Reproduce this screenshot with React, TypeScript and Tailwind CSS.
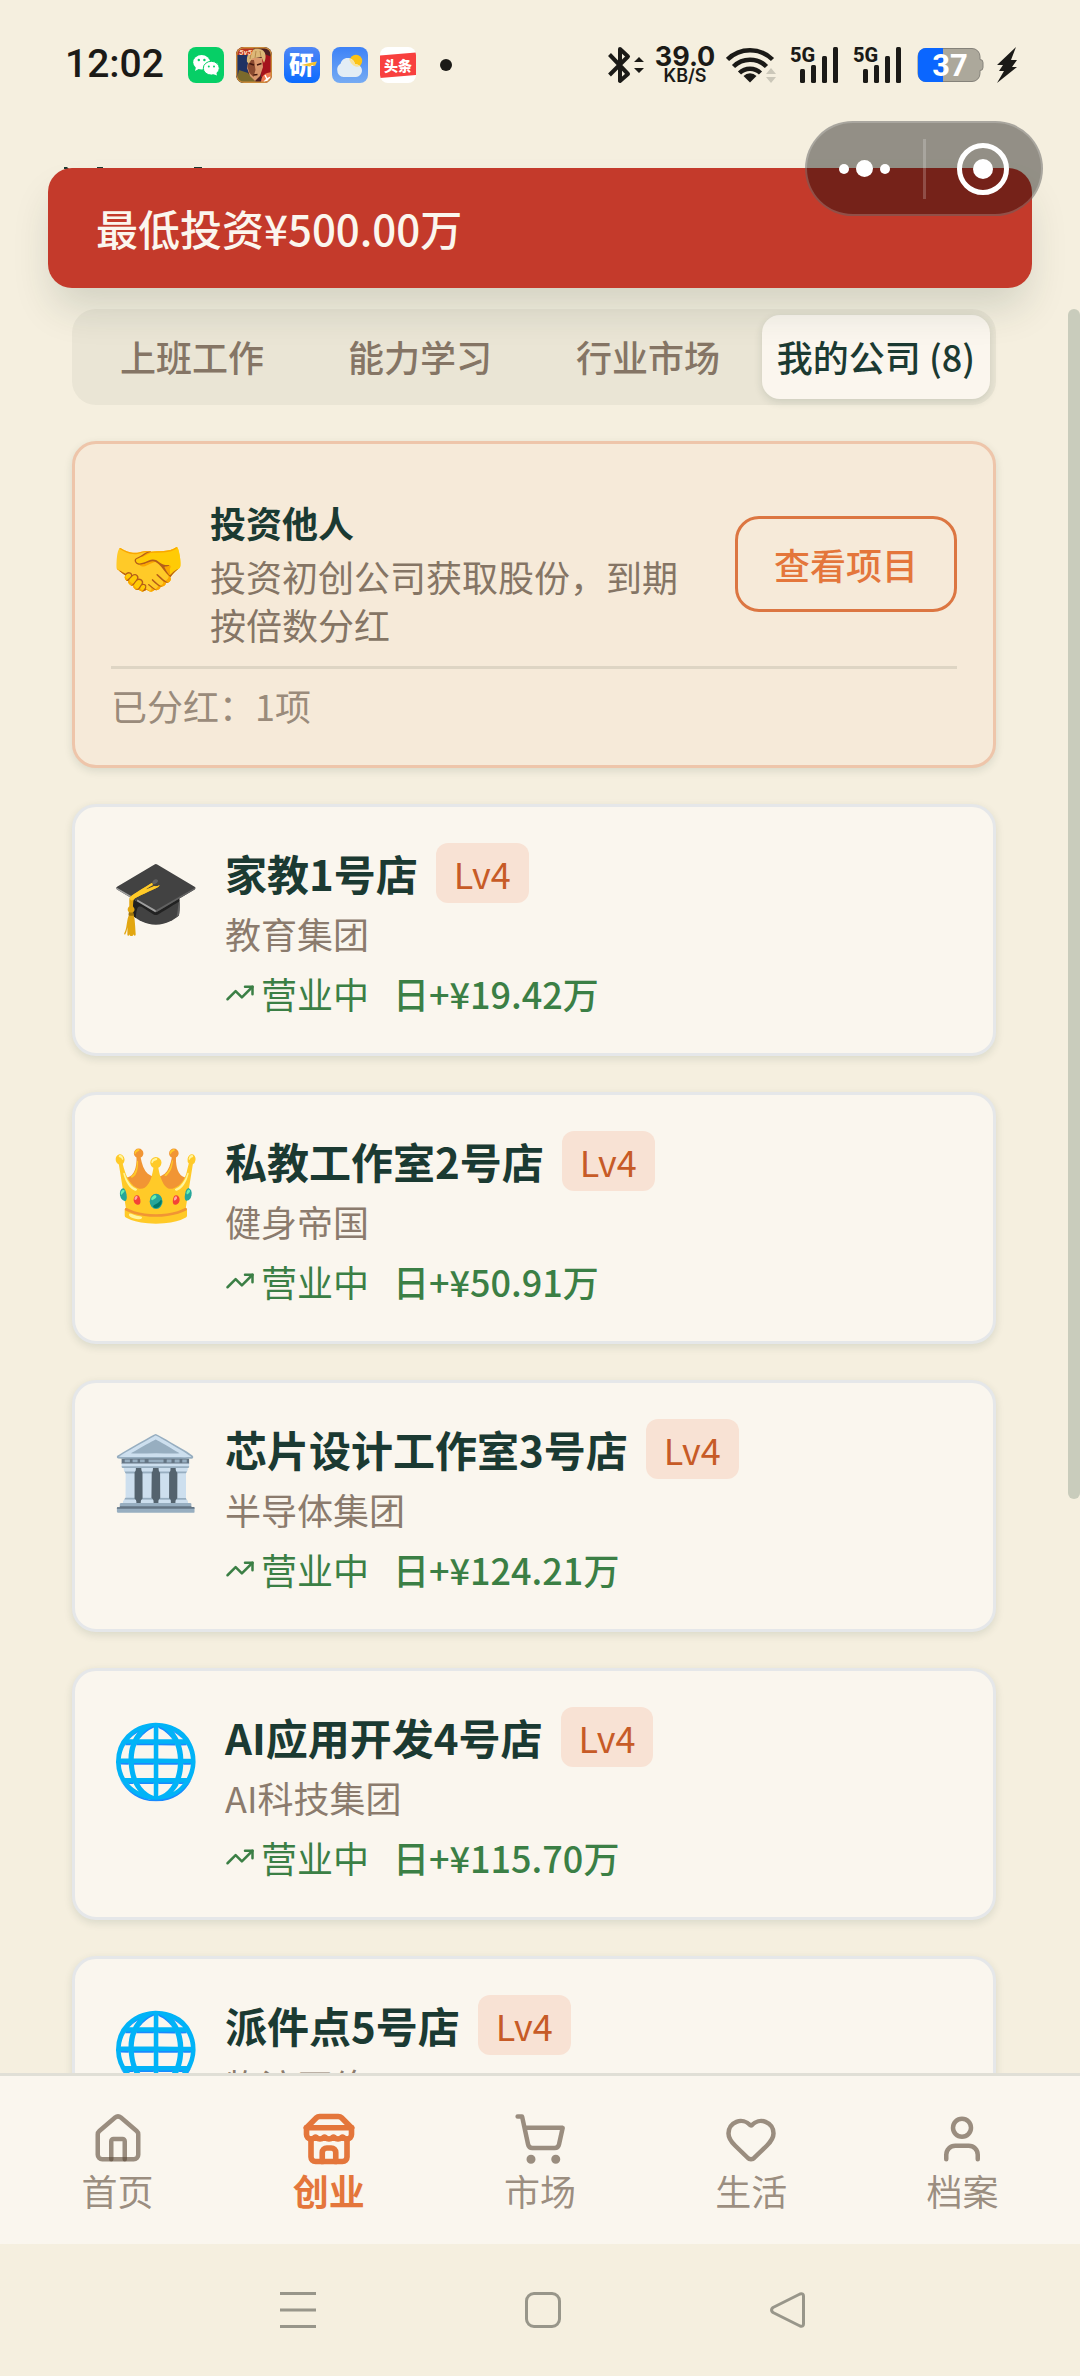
import type { ReactNode } from "react";
import { Heart, House, ShoppingCart, TrendingUp, User } from "lucide-react";

type Company = {
  icon: string;
  name: string;
  group: string;
  level: string;
  income?: string;
};

const companies: Company[] = [
  { icon: "🎓", name: "家教1号店", group: "教育集团", level: "Lv4", income: "日+¥19.42万" },
  { icon: "👑", name: "私教工作室2号店", group: "健身帝国", level: "Lv4", income: "日+¥50.91万" },
  { icon: "🏛️", name: "芯片设计工作室3号店", group: "半导体集团", level: "Lv4", income: "日+¥124.21万" },
  { icon: "🌐", name: "AI应用开发4号店", group: "AI科技集团", level: "Lv4", income: "日+¥115.70万" },
  { icon: "🌐", name: "派件点5号店", group: "物流网络", level: "Lv4" },
];

const tabs = ["上班工作", "能力学习", "行业市场", "我的公司 (8)"];

function StoreIcon() {
  return (
    <svg
      viewBox="0 0 24 24"
      className="size-[54px]"
      fill="none"
      stroke="currentColor"
      strokeWidth="2.5"
      strokeLinecap="round"
      strokeLinejoin="round"
    >
      <path d="m2 7 4.41-4.41A2 2 0 0 1 7.83 2h8.34a2 2 0 0 1 1.42.59L22 7" />
      <path d="M4 12v8a2 2 0 0 0 2 2h12a2 2 0 0 0 2-2v-8" />
      <path d="M15 22v-4a2 2 0 0 0-2-2h-2a2 2 0 0 0-2 2v4" />
      <path d="M2 7h20" />
      <path d="M22 7v3a2 2 0 0 1-2 2a2.700 2.700 0 0 1-1.590-.63.7.7 0 0 0-.82 0A2.700 2.700 0 0 1 16 12a2.700 2.700 0 0 1-1.590-.63.7.7 0 0 0-.82 0A2.700 2.700 0 0 1 12 12a2.700 2.700 0 0 1-1.590-.63.7.7 0 0 0-.82 0A2.700 2.700 0 0 1 8 12a2.700 2.700 0 0 1-1.590-.63.7.7 0 0 0-.82 0A2.700 2.700 0 0 1 4 12a2 2 0 0 1-2-2V7" />
    </svg>
  );
}

const navItems: { label: string; icon: ReactNode; active?: boolean }[] = [
  { label: "首页", icon: <House size={54} /> },
  { label: "创业", icon: <StoreIcon />, active: true },
  { label: "市场", icon: <ShoppingCart size={54} /> },
  { label: "生活", icon: <Heart size={54} /> },
  { label: "档案", icon: <User size={54} /> },
];

function AppTile({ children, label }: { children: ReactNode; label: string }) {
  return (
    <svg viewBox="0 0 36 36" className="size-9 rounded-lg" role="img" aria-label={label}>
      {children}
    </svg>
  );
}

function NotificationIcons() {
  return (
    <div className="flex items-center gap-3">
      <AppTile label="WeChat">
        <rect width="36" height="36" fill="#06cf66" />
        <ellipse cx="13.6" cy="15.3" rx="8.4" ry="7.2" fill="#fff" />
        <path d="M8 20l-1 4 4.5-2.4z" fill="#fff" />
        <ellipse cx="23.3" cy="21.2" rx="8" ry="6.9" fill="#fff" stroke="#06cf66" strokeWidth="1" />
        <path d="M25 27l4 1.6-.8-3.6z" fill="#fff" />
        <g fill="#06cf66">
          <circle cx="10.8" cy="13" r="1.2" />
          <circle cx="16.4" cy="13" r="1.2" />
          <circle cx="20.8" cy="19.4" r="1" />
          <circle cx="26" cy="19.4" r="1" />
        </g>
      </AppTile>
      <AppTile label="Game">
        <rect width="36" height="36" fill="#4c1f22" />
        <path d="M0 8h12v22H0z" fill="#1f3263" />
        <path d="M26 6l10 4v20H25z" fill="#a5121c" />
        <path d="M3 23l9 3 9 10H0z" fill="#7b6a2c" />
        <path d="M13 11l13 0 1 9-3 9-5 5-5-5-3-8z" fill="#d9976c" />
        <path d="M13 13h5l1.500 10-2 7-4-4-2-6z" fill="#8a4a30" />
        <path d="M11 15c-1-9 5-14 12-13 7 .5 8 8 5 14l-2.500-6-9.500 1.500-3 5z" fill="#dcb878" />
        <path d="M15 6l-1 6M20 4l-1 7M24 4l1 6" stroke="#b58a4c" strokeWidth="1" />
        <path d="M13.500 16.500l4.500 1.500M21 18l4.500-1.500M17.500 28l4-.5" stroke="#45190f" strokeWidth="1.500" />
        <path d="M0 0h18l-3 8H0z" fill="#b8331f" />
        <text x="3" y="8" fontSize="8" fontWeight="700" fontStyle="italic" fill="#ffd9b8" fontFamily="Roboto, sans-serif">5v5</text>
        <path d="M25 36c0-8 4-10 11-11v11z" fill="#ef7a52" />
        <path d="M29 28l2 4 4-2M31 32l-3 3M31 32l3 3" stroke="#fff" strokeWidth="1.500" fill="none" />
        <rect x=".7" y=".7" width="34.600" height="34.600" rx="7" fill="none" stroke="#c98a3a" strokeWidth="1.400" />
      </AppTile>
      <AppTile label="研">
        <defs>
          <linearGradient id="tile-blue" x1="0" y1="0" x2="0" y2="1">
            <stop offset="0" stopColor="#4f86f5" />
            <stop offset="1" stopColor="#0a6bff" />
          </linearGradient>
        </defs>
        <rect width="36" height="36" fill="url(#tile-blue)" />
        <text x="5" y="27" fontSize="25" fontWeight="900" fill="#fff" fontFamily="'Noto Sans CJK SC', sans-serif">研</text>
        <path d="M17 18l11-2.500 5-1-2 4.500-3-1-2 1.500z" fill="#f3c231" />
      </AppTile>
      <AppTile label="Weather">
        <defs>
          <linearGradient id="tile-sky" x1="0" y1="0" x2="0" y2="1">
            <stop offset="0" stopColor="#3d82f7" />
            <stop offset="1" stopColor="#76abf3" />
          </linearGradient>
        </defs>
        <rect width="36" height="36" fill="url(#tile-sky)" />
        <circle cx="24" cy="14" r="6.200" fill="#fcc315" />
        <path d="M11.500 30a6.500 7 0 0 1-6.300-7c0-4 2-5.500 3.500-6.500 1-4 4-5.500 7-5.500 4 0 6.500 2.500 7.300 6 4 .3 7 3 7 6.500S27 30 24 30z" fill="#e3edf5" />
        <path d="M17 11.400c3.600.7 5.300 3 6 5.600 2 0 3.500.8 5 2-3 2-9 0-11-7.600z" fill="#f9e29a" />
      </AppTile>
      <AppTile label="头条">
        <rect width="36" height="36" fill="#fff" />
        <path d="M0 8.500l36-3v22.500l-36 3z" fill="#f8403f" />
        <text x="4" y="24" fontSize="14" fontWeight="900" fill="#fff" fontFamily="'Noto Sans CJK SC', sans-serif">头条</text>
      </AppTile>
    </div>
  );
}

function Signal() {
  return (
    <svg viewBox="0 0 51 38" className="h-[38px] w-[51px] overflow-visible" fill="#1b1a17">
      <text x="0" y="16" fontSize="20" fontWeight="800" fontFamily="Roboto, sans-serif">5G</text>
      <rect x="10" y="23" width="5" height="14" rx="1.500" />
      <rect x="21" y="19" width="5" height="18" rx="1.500" />
      <rect x="32" y="10" width="5" height="27" rx="1.500" />
      <rect x="43" y="1" width="5" height="36" rx="1.500" />
    </svg>
  );
}

function StatusBar() {
  return (
    <header className="flex h-[129px] shrink-0 items-center pr-[62px] pl-[65px] text-[#1b1a17]">
      <time className="mr-6 font-['Roboto',sans-serif] text-[39px] leading-none font-medium">12:02</time>
      <NotificationIcons />
      <span className="ml-6 size-3 rounded-full bg-[#1b1a17]" />
      <div className="ml-auto flex items-center gap-3">
        <svg viewBox="0 0 36 38" className="h-[38px] w-9" fill="none" stroke="#1b1a17" strokeWidth="4">
          <path d="M1.500 8.500L20 28 12 35V3l8 7.500L1.500 29" strokeLinejoin="round" />
          <path d="M26 16l5-5 5 5zM26 22l5 5 5-5z" fill="#1b1a17" stroke="none" />
        </svg>
        <div className="flex w-[58px] flex-col items-center font-['Inter',sans-serif]">
          <span className="text-[27px] leading-[22px] font-bold">39.0</span>
          <span className="text-[18px] leading-[16px] font-semibold">KB/S</span>
        </div>
        <svg viewBox="0 0 52 38" className="h-[38px] w-[52px]" fill="none" stroke="#1b1a17" strokeWidth="4.500">
          <path d="M1.500 13.500a32 32 0 0 1 45 0M7.500 20.500a23.500 23.500 0 0 1 33 0M13.500 27a15 15 0 0 1 21 0" />
          <path d="M24 36.500l-6.500-6.500a9 9 0 0 1 13 0z" fill="#1b1a17" stroke="none" />
          <path d="M40 28l5-6 5 6zM40 31l5 6 5-6z" fill="#cbc7b9" stroke="none" />
        </svg>
        <Signal />
        <Signal />
        <svg viewBox="0 0 68 36" className="h-9 w-[68px]">
          <path d="M10 1.500h46a8 8 0 0 1 8 8v3a3 3 0 0 1 3 3v5a3 3 0 0 1-3 3v3a8 8 0 0 1-8 8H10a8 8 0 0 1-8-8v-17a8 8 0 0 1 8-8z" fill="#aca89b" stroke="#85827a" />
          <path d="M27 1v34H10a8 8 0 0 1-8-8V9a8 8 0 0 1 8-8z" fill="#0a66ff" />
          <text x="34" y="29" textAnchor="middle" fontSize="31" fontWeight="700" fill="#fff" fontFamily="Roboto, sans-serif">37</text>
        </svg>
        <svg viewBox="0 0 22 38" className="h-[38px] w-[22px]" fill="#1b1a17">
          <path d="M20 1L1 19h6l-4 6h5L1 37l20-16h-5l5-7h-6z" />
        </svg>
      </div>
    </header>
  );
}

function Toast() {
  return (
    <div
      role="alert"
      className="absolute top-[168px] right-12 left-12 z-10 flex h-[120px] items-center rounded-3xl bg-[#c43a2b] px-12 text-[42px] leading-[60px] font-medium text-[#fbf6ee] shadow-[0_24px_42px_-6px_rgba(27,58,45,0.16)]"
    >
      最低投资¥500.00万
    </div>
  );
}

function Capsule() {
  return (
    <div className="absolute top-[121px] right-[37px] z-20 flex h-[95px] w-[238px] items-center rounded-full border-2 border-white/20 bg-black/40">
      <button type="button" aria-label="更多" className="flex h-full flex-1 items-center justify-center gap-[7px]">
        <span className="size-[10px] rounded-full bg-white" />
        <span className="size-[17px] rounded-full bg-white" />
        <span className="size-[10px] rounded-full bg-white" />
      </button>
      <span className="h-[60px] w-[3px] bg-white/20" />
      <button type="button" aria-label="关闭" className="flex h-full flex-1 items-center justify-center">
        <span className="flex size-[52px] items-center justify-center rounded-full border-[5px] border-white">
          <span className="size-5 rounded-full bg-white" />
        </span>
      </button>
    </div>
  );
}

function HeadingEdge() {
  return (
    <svg viewBox="0 0 144 2" className="absolute top-[38px] left-[62px] h-[2px] w-36" fill="#1b3a32" aria-hidden="true">
      <path d="M2 0h3l2 2H2zM35 0h6v1h-6zM132 0h8v1h-8z" />
    </svg>
  );
}

function Tabs() {
  return (
    <div role="tablist" className="grid grid-cols-4 rounded-3xl bg-[#1e3a2f]/5 p-[6px] text-[36px] leading-[48px] font-medium">
      {tabs.map((tab, i) => (
        <button
          key={tab}
          type="button"
          role="tab"
          aria-selected={i === 3}
          className={
            i === 3
              ? "h-[84px] rounded-[18px] bg-[#fbf6ee] pb-[2px] whitespace-nowrap text-[#1b3a32] shadow-[0_3px_8px_rgba(27,58,45,0.14)]"
              : "h-[84px] rounded-[18px] pb-[2px] whitespace-nowrap text-[#857565]"
          }
        >
          {tab}
        </button>
      ))}
    </div>
  );
}

function InvestCard() {
  return (
    <section className="rounded-3xl border-[3px] border-[#eec5aa] bg-[#f6ead9] p-9 text-[36px] leading-[48px] shadow-[0_3px_9px_rgba(27,58,45,0.12)]">
      <div className="flex items-center gap-6">
        <span className="text-[60px] leading-[80px]">🤝</span>
        <div className="min-w-0 flex-1 pt-[18px]">
          <h2 className="font-bold text-[#1b3a32]">投资他人</h2>
          <p className="mt-[6px] text-[#857565]">投资初创公司获取股份，到期按倍数分红</p>
        </div>
        <button type="button" className="h-24 shrink-0 rounded-3xl border-[3px] border-[#dc7642] px-9 font-medium text-[#e4763b]">
          查看项目
        </button>
      </div>
      <p className="mt-[18px] border-t-[3px] border-[#ded5c4] pt-3 text-[#9a8b7b]">已分红：1项</p>
    </section>
  );
}

function CompanyCard({ company }: { company: Company }) {
  return (
    <li className="flex shrink-0 items-start gap-6 rounded-3xl border-[3px] border-[#e5e7e9] bg-[#faf6ee] p-9 text-[36px] leading-[48px] shadow-[0_3px_9px_rgba(27,58,45,0.12)]">
      <span className="text-[72px] leading-[96px]">{company.icon}</span>
      <div className="min-w-0 flex-1">
        <div className="flex items-center gap-[18px]">
          <h3 className="text-[42px] leading-[60px] font-bold text-[#1b3a32]">{company.name}</h3>
          <span className="rounded-xl bg-[#f8e2d4] px-[18px] py-[6px] text-[#c75b27]">{company.level}</span>
        </div>
        <p className="mt-[6px] text-[#8b7b6d]">{company.group}</p>
        {company.income && (
          <div className="mt-3 flex items-center gap-6 text-[#3b7f45]">
            <span className="flex items-center gap-[6px]">
              <TrendingUp size={30} />
              营业中
            </span>
            <span className="font-medium">{company.income}</span>
          </div>
        )}
      </div>
    </li>
  );
}

function BottomNav() {
  return (
    <nav className="grid h-[171px] shrink-0 grid-cols-5 border-t-[3px] border-[#e0dfd6] bg-[#faf6ee] px-3">
      {navItems.map(({ label, icon, active }) => (
        <a
          key={label}
          href="#"
          className={
            active
              ? "flex flex-col items-center pt-9 text-[36px] leading-[48px] font-bold text-[#e4763b]"
              : "flex flex-col items-center pt-9 text-[36px] leading-[48px] text-[#5a4735]/60"
          }
        >
          {icon}
          {label}
        </a>
      ))}
    </nav>
  );
}

function SystemNav() {
  return (
    <footer className="flex h-[132px] shrink-0 items-center justify-between pr-[274px] pl-[280px]">
      <button type="button" aria-label="最近任务">
        <svg viewBox="0 0 36 36" className="size-9" stroke="#98968a" strokeWidth="3">
          <path d="M0 1.500h36M0 18h36M0 34.500h36" />
        </svg>
      </button>
      <button type="button" aria-label="主屏幕">
        <svg viewBox="0 0 36 36" className="size-9" fill="none" stroke="#98968a" strokeWidth="3">
          <rect x="1.500" y="1.500" width="33" height="33" rx="7.500" />
        </svg>
      </button>
      <button type="button" aria-label="返回">
        <svg viewBox="0 0 36 36" className="size-9" fill="none" stroke="#98968a" strokeWidth="3" strokeLinejoin="round">
          <path d="M30 2L3 15.500Q0 18 3 20.500L30 34Q33.500 35 33.500 32V4Q33.500 1 30 2z" />
        </svg>
      </button>
    </footer>
  );
}

export default function App() {
  return (
    <div className="relative flex h-screen flex-col overflow-hidden bg-[#f5efdf] font-['Noto_Sans_CJK_SC',sans-serif]">
      <StatusBar />
      <Toast />
      <Capsule />
      <main className="relative flex min-h-0 flex-1 flex-col gap-9 overflow-hidden pt-[180px] pr-[84px] pl-[72px]">
        <HeadingEdge />
        <Tabs />
        <InvestCard />
        <ul className="flex flex-col gap-9">
          {companies.map((company) => (
            <CompanyCard key={company.name} company={company} />
          ))}
        </ul>
        <span className="absolute top-[180px] right-0 h-[1190px] w-3 rounded-full bg-[#c9ccbc]" />
      </main>
      <BottomNav />
      <SystemNav />
    </div>
  );
}
